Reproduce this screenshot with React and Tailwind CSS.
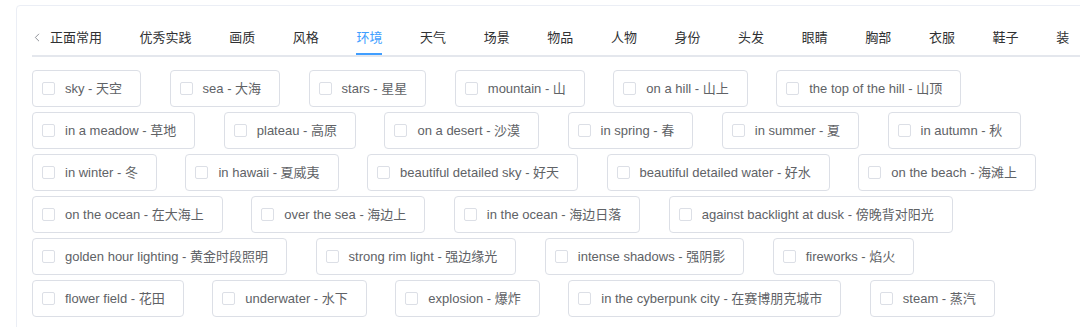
const tabs = ['正面常用', '优秀实践', '画质', '风格', '环境', '天气', '场景', '物品', '人物', '身份', '头发', '眼睛', '胸部', '衣服', '鞋子', '装饰']

const rows = [
  ['sky - 天空', 'sea - 大海', 'stars - 星星', 'mountain - 山', 'on a hill - 山上', 'the top of the hill - 山顶'],
  ['in a meadow - 草地', 'plateau - 高原', 'on a desert - 沙漠', 'in spring - 春', 'in summer - 夏', 'in autumn - 秋'],
  ['in winter - 冬', 'in hawaii - 夏威夷', 'beautiful detailed sky - 好天', 'beautiful detailed water - 好水', 'on the beach - 海滩上'],
  ['on the ocean - 在大海上', 'over the sea - 海边上', 'in the ocean - 海边日落', 'against backlight at dusk - 傍晚背对阳光'],
  ['golden hour lighting - 黄金时段照明', 'strong rim light - 强边缘光', 'intense shadows - 强阴影', 'fireworks - 焰火'],
  ['flower field - 花田', 'underwater - 水下', 'explosion - 爆炸', 'in the cyberpunk city - 在赛博朋克城市', 'steam - 蒸汽'],
]

function Chip({ label }) {
  return (
    <label className="flex items-center h-[37px] shrink-0 pl-[9px] pr-[18px] border border-[#dcdfe6] rounded-[4px] bg-white cursor-pointer">
      <span className="w-[13px] h-[13px] border border-[#dcdfe6] rounded-[2px] bg-white shrink-0" />
      <span className="ml-[10px] text-[13px] text-[#606266] whitespace-nowrap leading-none">{label}</span>
    </label>
  )
}

export default function App() {
  const active = '环境'
  return (
    <div className="w-[1080px] h-[327px] overflow-hidden bg-white" style={{ fontFamily: '"Liberation Sans", "Noto Sans CJK SC", sans-serif' }}>
      <div className="ml-[16px] mt-[5px] w-[1100px] h-[400px] border border-[#ebeef5] rounded-[4px] bg-white pt-[14px] pl-[15px]">
        <div className="flex items-stretch h-[37px] border-b-2 border-[#e4e7ed]">
          <div className="w-[18px] shrink-0 flex items-center pl-[2px]">
            <svg width="6" height="9" viewBox="0 0 6 9" fill="none">
              <path d="M5 0.8 1.3 4.5 5 8.2" stroke="#909399" strokeWidth="1" />
            </svg>
          </div>
          <div className="w-[1019px] shrink-0 overflow-hidden flex items-stretch">
            {tabs.map((t, i) => (
              <div key={t} className={`shrink-0 flex items-center text-[13px] whitespace-nowrap ${i === 0 ? 'pr-[18.8px]' : 'px-[18.8px]'} ${t === active ? 'text-[#409eff]' : 'text-[#303133]'}`}>
                <span className="relative h-full flex items-center">
                  {t}
                  {t === active && <span className="absolute left-0 right-0 bottom-0 h-[2px] bg-[#409eff]" />}
                </span>
              </div>
            ))}
          </div>
        </div>
        <div className="mt-[13px] flex flex-col gap-[5px]">
          {rows.map((r, i) => (
            <div key={i} className="flex gap-[28.5px]">
              {r.map(l => <Chip key={l} label={l} />)}
            </div>
          ))}
        </div>
      </div>
    </div>
  )
}
